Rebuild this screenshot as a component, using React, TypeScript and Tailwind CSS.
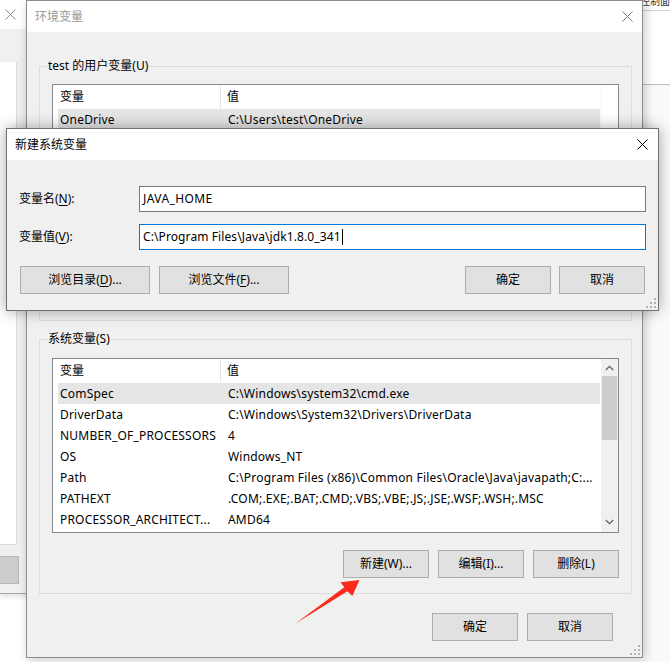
import React from "react";

function CloseX({ color }: { color: string }) {
  return (
    <svg width="11" height="11" viewBox="0 0 11 11" className="block">
      <path d="M0.5 0.5L10.5 10.5M10.5 0.5L0.5 10.5" stroke={color} strokeWidth="1" fill="none" />
    </svg>
  );
}

function Grip() {
  return (
    <svg width="10" height="10" viewBox="0 0 10 10" className="block">
      {[
        [8, 0],
        [4, 4],
        [8, 4],
        [0, 8],
        [4, 8],
        [8, 8],
      ].map(([x, y], i) => (
        <rect key={i} x={x} y={y} width="2" height="2" fill="#b4b4b4" />
      ))}
    </svg>
  );
}

function Chevron({ up }: { up: boolean }) {
  return (
    <svg width="9" height="6" viewBox="0 0 9 6" className="block">
      <path
        d={up ? "M0.8 5L4.5 1.3L8.2 5" : "M0.8 1L4.5 4.7L8.2 1"}
        stroke="#606060"
        strokeWidth="1.3"
        fill="none"
      />
    </svg>
  );
}

function Btn({ children, className }: { children: React.ReactNode; className: string }) {
  return (
    <div
      className={`flex items-center justify-center h-[28px] bg-[#e1e1e1] border border-[#adadad] text-black ${className}`}
    >
      {children}
    </div>
  );
}

type Row = [string, string];

function ListView({
  rows,
  heightClass,
  scrollbar,
}: {
  rows: Row[];
  heightClass: string;
  scrollbar: boolean;
}) {
  return (
    <div className={`flex bg-white border border-[#828790] overflow-hidden ${heightClass}`}>
      <div className="flex-1 flex flex-col min-w-0">
        <div className="h-[24px] flex shrink-0">
          <div className="w-[168px] border-r border-[#e5e5e5] flex items-center pl-[7px] my-[1px]">变量</div>
          <div className="flex-1 flex items-center pl-[6px]">值</div>
        </div>
        <div className="flex flex-col pl-[5px] pr-[1px] tracking-[0.2px]">
          {rows.map(([a, b], i) => (
            <div
              key={i}
              className={`h-[21px] flex items-center shrink-0 ${i === 0 ? "bg-[#e5e5e5]" : ""}`}
            >
              <div className="w-[170px] pl-[2px] whitespace-nowrap overflow-hidden leading-[18px]">{a}</div>
              <div className="flex-1 whitespace-nowrap overflow-hidden leading-[18px]">{b}</div>
            </div>
          ))}
        </div>
      </div>
      {scrollbar ? (
        <div className="w-[17px] bg-[#f0f0f0] flex flex-col shrink-0">
          <div className="h-[17px] flex items-center justify-center">
            <Chevron up={true} />
          </div>
          <div className="h-[64px] mx-[1px] bg-[#cdcdcd]" />
          <div className="flex-1" />
          <div className="h-[17px] flex items-center justify-center mb-[2px]">
            <Chevron up={false} />
          </div>
        </div>
      ) : (
        <div className="w-[17px] bg-white border-l border-[#f3f3f3] shrink-0" />
      )}
    </div>
  );
}

function GroupBox({
  label,
  children,
  className,
}: {
  label: string;
  children: React.ReactNode;
  className: string;
}) {
  return (
    <div className={`relative h-[255px] border border-[#dcdcdc] px-[12px] flex flex-col ${className}`}>
      <span className="absolute left-[7px] -top-[9px] px-[1px] bg-[#f0f0f0] leading-[16px]">{label}</span>
      {children}
    </div>
  );
}

const userRows: Row[] = [["OneDrive", "C:\\Users\\test\\OneDrive"]];

const sysRows: Row[] = [
  ["ComSpec", "C:\\Windows\\system32\\cmd.exe"],
  ["DriverData", "C:\\Windows\\System32\\Drivers\\DriverData"],
  ["NUMBER_OF_PROCESSORS", "4"],
  ["OS", "Windows_NT"],
  ["Path", "C:\\Program Files (x86)\\Common Files\\Oracle\\Java\\javapath;C:..."],
  ["PATHEXT", ".COM;.EXE;.BAT;.CMD;.VBS;.VBE;.JS;.JSE;.WSF;.WSH;.MSC"],
  ["PROCESSOR_ARCHITECT...", "AMD64"],
];

export default function App() {
  return (
    <div className="relative w-[670px] h-[662px] overflow-hidden bg-white font-['Noto_Sans','Noto_Sans_CJK_SC',sans-serif] text-[12px] text-black leading-none">
      {/* left background window */}
      <div className="absolute left-0 top-0 w-[60px] h-[594px] bg-[#f0f0f0] border-b border-[#a8a8a8] shadow-[0_2px_6px_rgba(0,0,0,0.15)] flex flex-col">
        <div className="h-[29px] bg-white flex items-center pl-[5px]">
          <CloseX color="#8a8a8a" />
        </div>
        <div className="mt-[33px] w-[17px] h-[483px] bg-white border-r border-b border-[#d9d9d9]" />
        <div className="mt-[11px] w-[19px] h-[28px] bg-[#cccccc] border border-l-0 border-[#b8b8b8]" />
      </div>

      {/* right background window */}
      <div className="absolute left-[643px] top-0 w-[27px] h-[662px] bg-white flex flex-col">
        <div className="h-[11px] border-b border-[#d0d0d0] overflow-hidden">
          <div className="-mt-[4px] -ml-[3px] text-[10px] text-[#333] whitespace-nowrap">控制面板</div>
        </div>
        <div className="h-[74px] border-b border-[#bdbdbd]" />
        <div className="flex-1 bg-[#fafafa]" />
      </div>

      {/* main window: 环境变量 */}
      <div className="absolute left-[26px] top-0 w-[617px] h-[658px] border border-[#8c8c8c] bg-[#f0f0f0] shadow-[2px_2px_10px_rgba(0,0,0,0.22)] flex flex-col">
        <div className="h-[31px] bg-white flex items-center justify-between pl-[8px] pr-[9px] shrink-0">
          <span className="text-[#999999]">环境变量</span>
          <CloseX color="#777777" />
        </div>
        <div className="flex-1 flex flex-col pl-[12px] pr-[10px]">
          <GroupBox label="test 的用户变量(U)" className="mt-[34px] pt-[17px]">
            <ListView rows={userRows} heightClass="h-[176px]" scrollbar={false} />
          </GroupBox>
          <GroupBox label="系统变量(S)" className="mt-[18px] pt-[18px]">
            <ListView rows={sysRows} heightClass="h-[175px]" scrollbar={true} />
            <div className="mt-[17px] flex justify-end gap-[9px]">
              <Btn className="w-[86px]">新建(W)...</Btn>
              <Btn className="w-[86px]">编辑(I)...</Btn>
              <Btn className="w-[86px]">删除(L)</Btn>
            </div>
          </GroupBox>
          <div className="mt-[19px] flex justify-end gap-[9px] pr-[19px]">
            <Btn className="w-[86px]">确定</Btn>
            <Btn className="w-[86px]">取消</Btn>
          </div>
        </div>
        <div className="absolute right-[2px] bottom-[2px]">
          <Grip />
        </div>
      </div>

      {/* dialog: 新建系统变量 */}
      <div className="absolute left-[6px] top-[128px] w-[653px] h-[183px] border border-[#707070] bg-[#f0f0f0] shadow-[0_0_14px_rgba(0,0,0,0.35)] flex flex-col">
        <div className="h-[31px] bg-white flex items-center justify-between pl-[8px] pr-[10px] shrink-0">
          <span>新建系统变量</span>
          <CloseX color="#000000" />
        </div>
        <div className="flex-1 flex flex-col px-[12px] pt-[26px]">
          <div className="flex items-center h-[26px]">
            <span className="w-[120px] shrink-0">
              变量名(<span className="underline underline-offset-[2px]">N</span>):
            </span>
            <div className="flex-1 h-full bg-white border border-[#7a7a7a] flex items-center pl-[3px] tracking-[0.4px]">
              JAVA_HOME
            </div>
          </div>
          <div className="mt-[12px] flex items-center h-[26px]">
            <span className="w-[120px] shrink-0">
              变量值(<span className="underline underline-offset-[2px]">V</span>):
            </span>
            <div className="flex-1 h-full bg-white border border-[#0078d7] flex items-center pl-[3px] tracking-[0.1px]">
              <span>C:\Program Files\Java\jdk1.8.0_341</span>
              <span className="inline-block w-[1px] h-[16px] bg-black ml-[1px]" />
            </div>
          </div>
          <div className="mt-[16px] flex items-center">
            <Btn className="w-[130px] ml-[1px]">
              浏览目录(<span className="underline underline-offset-[2px]">D</span>)...
            </Btn>
            <Btn className="w-[130px] ml-[9px]">
              浏览文件(<span className="underline underline-offset-[2px]">F</span>)...
            </Btn>
            <div className="flex-1" />
            <Btn className="w-[86px]">确定</Btn>
            <Btn className="w-[86px] ml-[8px] mr-[1px]">取消</Btn>
          </div>
        </div>
        <div className="absolute right-[2px] bottom-[2px]">
          <Grip />
        </div>
      </div>

      {/* red arrow annotation */}
      <svg
        className="absolute left-0 top-0 pointer-events-none"
        width="670"
        height="662"
        viewBox="0 0 670 662"
      >
        <polygon
          points="295.5,623.5 344.3,587.2 340.5,582.2 359.5,580 352.3,596 347.4,591.3"
          fill="#fb2a1c"
        />
      </svg>
    </div>
  );
}
